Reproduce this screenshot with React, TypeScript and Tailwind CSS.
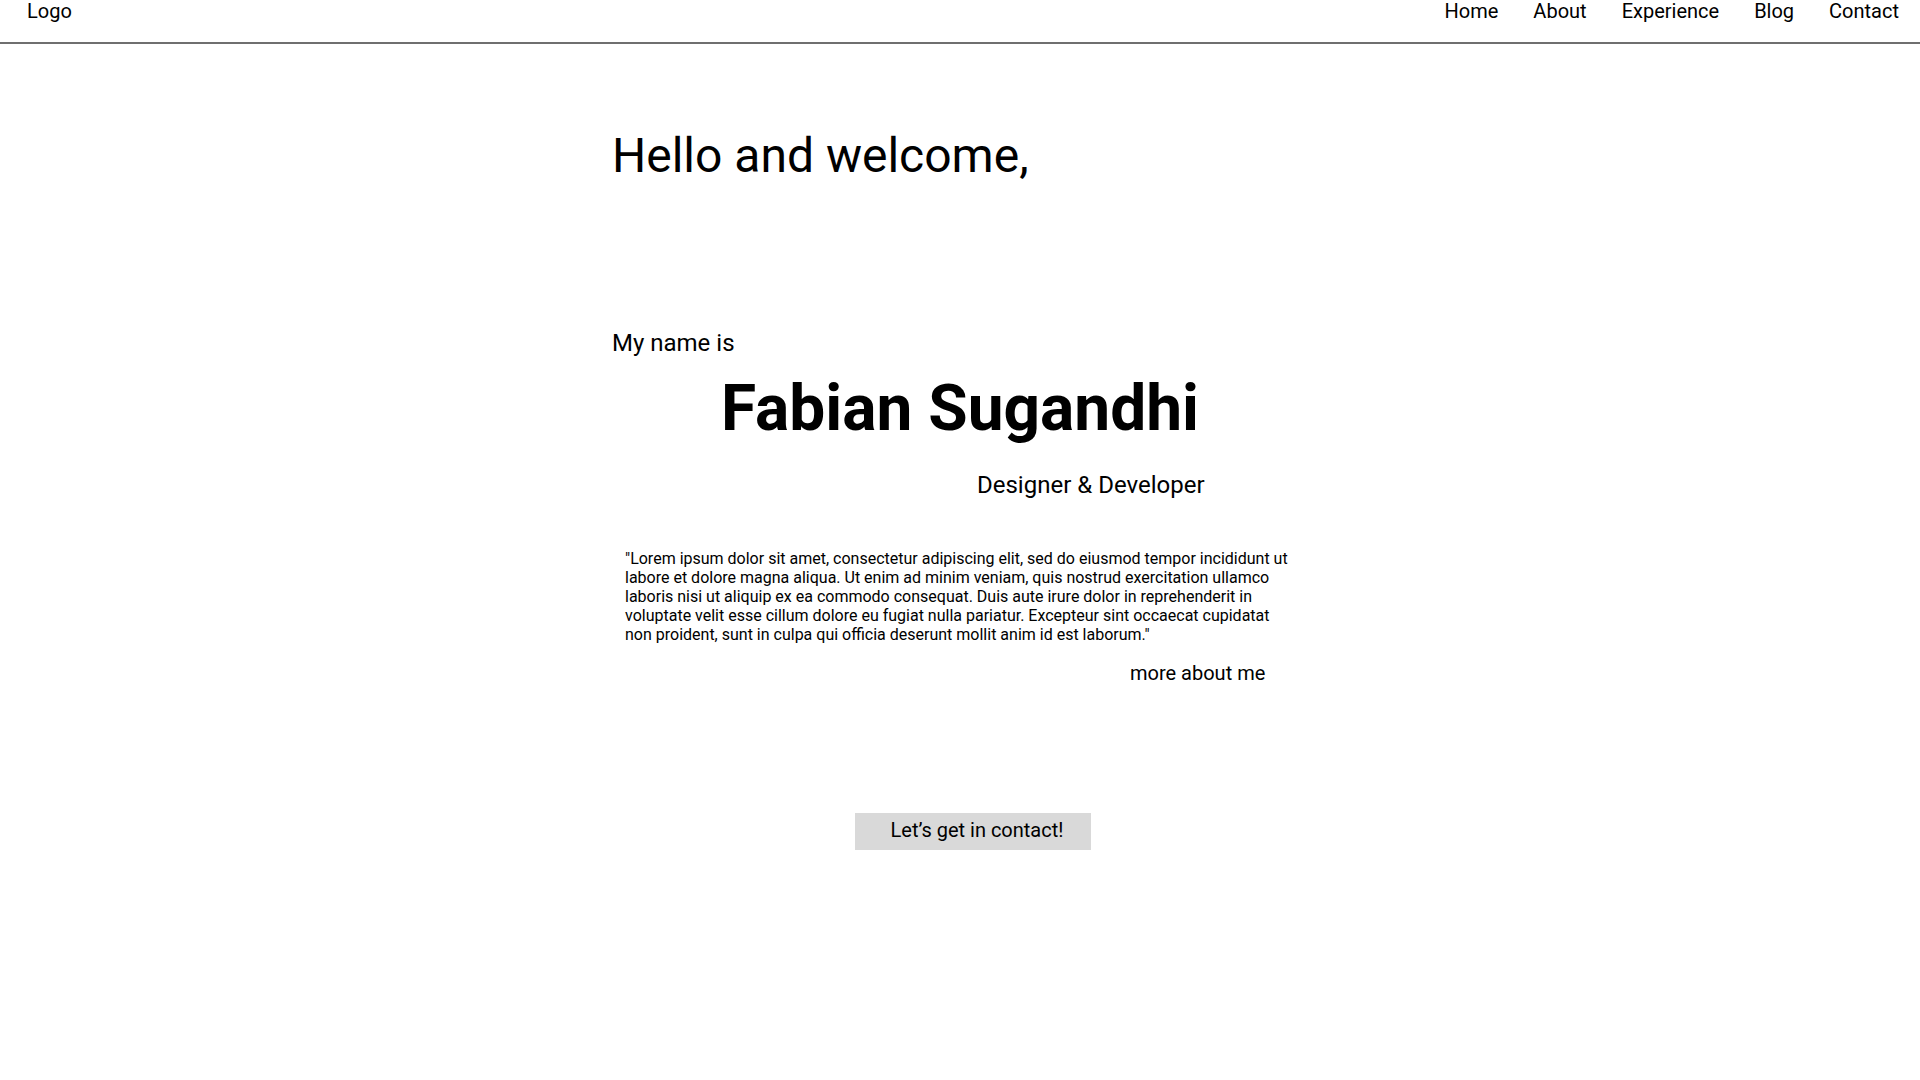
import React from "react";

export default function App() {
  const nav = ["Home", "About", "Experience", "Blog", "Contact"];
  return (
    <div className="min-h-screen w-full bg-white text-black" style={{ fontFamily: "Roboto, 'Noto Sans', sans-serif" }}>
      <header className="flex h-[44px] items-start justify-between border-b-2 border-[#6f6f6f] pl-[27px] pr-[21px]">
        <div className="text-[20px] leading-[23px]">Logo</div>
        <nav className="flex gap-[35px] text-[20px] leading-[23px]">
          {nav.map((n) => (
            <a key={n} href="#" className="text-black">
              {n}
            </a>
          ))}
        </nav>
      </header>
      <main className="mx-auto flex w-[696px] flex-col">
        <h1 className="mt-[84px] text-[48px] font-normal leading-[56px]">Hello and welcome,</h1>
        <p className="mt-[145px] text-[24px] leading-[28px]">My name is</p>
        <h2 className="mt-[14px] text-center text-[64px] font-bold leading-[75px]">Fabian Sugandhi</h2>
        <p className="mt-[25px] pl-[365px] text-[24px] leading-[28px]">Designer &amp; Developer</p>
        <p className="ml-[13px] mt-[50px] w-[672px] text-[16px] leading-[19px]">
          "Lorem ipsum dolor sit amet, consectetur adipiscing elit, sed do eiusmod tempor incididunt ut labore et dolore magna aliqua. Ut enim ad minim veniam, quis nostrud exercitation ullamco laboris nisi ut aliquip ex ea commodo consequat. Duis aute irure dolor in reprehenderit in voluptate velit esse cillum dolore eu fugiat nulla pariatur. Excepteur sint occaecat cupidatat non proident, sunt in culpa qui officia deserunt mollit anim id est laborum."
        </p>
        <a href="#" className="ml-[518px] mt-[18px] text-[20px] leading-[23px] text-black">
          more about me
        </a>
        <div className="mt-[128px] pl-[243px]">
          <button className="h-[37px] w-[236px] bg-[#d9d9d9] pb-[2px] pl-[8px] text-[20px] leading-[23px] text-black">
            Let’s get in contact!
          </button>
        </div>
      </main>
    </div>
  );
}
